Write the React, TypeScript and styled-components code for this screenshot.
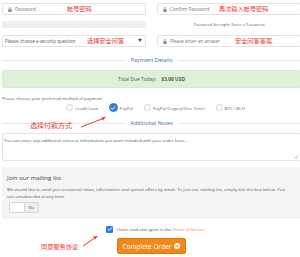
import React from "react";
import styled, { createGlobalStyle } from "styled-components";

const Global = createGlobalStyle`
  html, body { margin: 0; padding: 0; background: #fff; }
  body { font-family: "Open Sans", "Noto Sans CJK SC", sans-serif; color: #555; }
  * { box-sizing: border-box; }
`;

const Page = styled.div`
  position: relative;
  width: 300px;
  height: 257px;
  overflow: hidden;
  padding: 3px 0 0 2px;
`;

const Content = styled.div`
  width: 299px;
  display: flex;
  flex-direction: column;
`;

const FieldGrid = styled.div`
  display: grid;
  grid-template-columns: 144px 1fr;
  grid-template-rows: 12px 7px 12px;
  column-gap: 11px;
  row-gap: 6px;
`;

const InputBox = styled.div<{ $icon?: boolean; $low?: boolean }>`
  position: relative;
  display: flex;
  align-items: center;
  height: 12px;
  border: 1px solid #e3e3e3;
  border-radius: 2px;
  background: #fff;
  padding-left: ${(p) => (p.$icon ? 5 : 2)}px;
  margin-top: ${(p) => (p.$low ? 1 : 0)}px;
`;

const Placeholder = styled.span`
  font-size: 4.6px;
  line-height: 6px;
  color: #777;
  white-space: nowrap;
  margin-left: 3px;
`;

const SelectText = styled.span`
  font-size: 4.5px;
  line-height: 6px;
  color: #555;
  white-space: nowrap;
  flex: 1;
`;

const Caret = styled.span`
  font-size: 4px;
  line-height: 6px;
  color: #444;
  margin-right: 3px;
`;

const Note = styled.span<{ $left: number; $size?: number }>`
  position: absolute;
  left: ${(p) => p.$left}px;
  top: 50%;
  transform: translateY(-50%);
  font-family: "Noto Sans CJK SC", sans-serif;
  font-size: ${(p) => p.$size ?? 6.2}px;
  line-height: 8px;
  color: #f0332d;
  white-space: nowrap;
`;

const FreeNote = styled.span<{ $left: number; $top: number; $size?: number }>`
  position: absolute;
  left: ${(p) => p.$left}px;
  top: ${(p) => p.$top}px;
  font-family: "Noto Sans CJK SC", sans-serif;
  font-size: ${(p) => p.$size ?? 6.2}px;
  line-height: 8px;
  color: #f0332d;
  white-space: nowrap;
`;

const ArrowSvg = styled.svg<{ $left: number; $top: number }>`
  position: absolute;
  left: ${(p) => p.$left}px;
  top: ${(p) => p.$top}px;
  overflow: visible;
`;

const StrengthBar = styled.div`
  height: 7px;
  background: #eee;
  border-radius: 2px;
`;

const StrengthText = styled.div`
  font-size: 4.1px;
  line-height: 7px;
  color: #666;
  text-align: center;
  white-space: nowrap;
`;

const Heading = styled.div<{ $mt: number }>`
  display: flex;
  align-items: center;
  gap: 6px;
  height: 8px;
  margin-top: ${(p) => p.$mt}px;
  &::before,
  &::after {
    content: "";
    flex: 1;
    height: 1px;
    background: #e8e8e8;
  }
`;

const HeadingText = styled.span`
  font-size: 5.5px;
  line-height: 8px;
  color: #4a6f92;
  white-space: nowrap;
`;

const TotalBox = styled.div`
  margin-top: 6px;
  height: 18px;
  background: #dff0d8;
  border: 1px solid #d6ead0;
  border-radius: 2px;
  display: flex;
  align-items: center;
  justify-content: center;
  gap: 5px;
  font-size: 4.9px;
  color: #4d5a4b;
`;

const Strong = styled.strong`
  font-weight: 700;
`;

const Hint = styled.div`
  margin-top: 7px;
  font-size: 4.3px;
  line-height: 6px;
  color: #555;
  white-space: nowrap;
`;

const RadioRow = styled.div`
  margin-top: 2px;
  height: 9px;
  display: flex;
  align-items: center;
  justify-content: center;
  gap: 11px;
  padding-left: 8px;
`;

const RadioItem = styled.label`
  display: flex;
  align-items: center;
  gap: 2px;
  font-size: 4.3px;
  color: #666;
  white-space: nowrap;
`;

const RadioCircle = styled.span<{ $on?: boolean }>`
  width: ${(p) => (p.$on ? 9 : 7)}px;
  height: ${(p) => (p.$on ? 9 : 7)}px;
  border-radius: 50%;
  border: 1px solid ${(p) => (p.$on ? "#2e7fcf" : "#cfcfcf")};
  background: ${(p) => (p.$on ? "#2e7fcf" : "#fff")};
  display: flex;
  align-items: center;
  justify-content: center;
`;

const Notes = styled.div`
  margin-top: 6px;
  position: relative;
  height: 28px;
  border: 1px solid #e3e3e3;
  border-radius: 2px;
  padding: 3px 1px;
  font-size: 4.3px;
  line-height: 6px;
  color: #555;
  white-space: nowrap;
  overflow: hidden;
`;

const Grip = styled.svg`
  position: absolute;
  right: 2px;
  bottom: 1px;
`;

const MailBox = styled.div`
  margin-top: 6px;
  height: 52px;
  background: #f5f5f5;
  padding: 7px 5px 0 5px;
`;

const MailTitle = styled.div`
  font-size: 6.1px;
  line-height: 8px;
  color: #444;
`;

const MailDesc = styled.div`
  margin-top: 4px;
  font-size: 4.35px;
  line-height: 7px;
  color: #555;
  width: 285px;
`;

const Toggle = styled.div`
  margin-top: 2px;
  margin-left: 2px;
  display: flex;
  width: 30px;
  height: 11px;
  border: 1px solid #d5d5d5;
  border-radius: 2px;
  overflow: hidden;
`;

const ToggleKnob = styled.span`
  width: 14px;
  background: #fff;
`;

const ToggleOff = styled.span`
  flex: 1;
  background: #eee;
  border-left: 1px solid #d5d5d5;
  font-size: 4px;
  line-height: 9px;
  text-align: center;
  color: #555;
`;

const AgreeRow = styled.div`
  margin-top: 6px;
  height: 8px;
  display: flex;
  align-items: center;
  justify-content: center;
  gap: 3px;
  padding-left: 8px;
  font-size: 4.2px;
  color: #555;
  white-space: nowrap;
`;

const CheckBox = styled.span`
  width: 7px;
  height: 7px;
  border-radius: 1px;
  background: #2e7fcf;
  display: flex;
  align-items: center;
  justify-content: center;
`;

const Link = styled.span`
  color: #f0861a;
`;

const ButtonRow = styled.div`
  margin-top: 5px;
  display: flex;
  justify-content: center;
`;

const OrderButton = styled.button`
  width: 69px;
  height: 16px;
  padding: 0;
  border: 1px solid #e07b0c;
  border-radius: 2px;
  background: #f0881a;
  color: #fff;
  font-family: "Open Sans", sans-serif;
  font-size: 6.5px;
  display: flex;
  align-items: center;
  justify-content: center;
  gap: 3px;
`;

const Lock = () => (
  <svg width="4" height="5" viewBox="0 0 8 10">
    <path d="M2 4.5V3a2 2 0 0 1 4 0v1.5" fill="none" stroke="#8a8a8a" strokeWidth="1.4" />
    <rect x="0.5" y="4.5" width="7" height="5.5" rx="0.8" fill="#8a8a8a" />
  </svg>
);

const Tick = ({ s }: { s: number }) => (
  <svg width={s} height={s} viewBox="0 0 10 10">
    <path d="M2 5.2l2 2 4-4.4" fill="none" stroke="#fff" strokeWidth="1.6" strokeLinecap="round" strokeLinejoin="round" />
  </svg>
);

const RedArrow = ({ left, top, w, h }: { left: number; top: number; w: number; h: number }) => (
  <ArrowSvg $left={left} $top={top} width={w} height={h} viewBox={`0 0 ${w} ${h}`}>
    <line x1="0" y1={h} x2={w - 2} y2="1.2" stroke="#f0332d" strokeWidth="1" />
    <path d={`M${w} 0 L${w - 5} 0.6 L${w - 3} 3.2 Z`} fill="#f0332d" />
  </ArrowSvg>
);

export default function App() {
  return (
    <>
      <Global />
      <Page>
        <Content>
          <FieldGrid>
            <InputBox $icon>
              <Lock />
              <Placeholder>Password</Placeholder>
              <Note $left={64}>帐号密码</Note>
            </InputBox>
            <InputBox $icon>
              <Lock />
              <Placeholder>Confirm Password</Placeholder>
              <Note $left={61}>再次输入帐号密码</Note>
            </InputBox>
            <StrengthBar />
            <StrengthText>Password Strength: Enter a Password</StrengthText>
            <InputBox $low>
              <SelectText>Please choose a security question</SelectText>
              <Caret>▼</Caret>
              <Note $left={84}>选择安全问答</Note>
            </InputBox>
            <InputBox $icon $low>
              <Lock />
              <Placeholder>Please enter an answer</Placeholder>
              <Note $left={77}>安全问答答案</Note>
            </InputBox>
          </FieldGrid>

          <Heading $mt={10}>
            <HeadingText>Payment Details</HeadingText>
          </Heading>

          <TotalBox>
            <span>Total Due Today:</span>
            <Strong>$3.00 USD</Strong>
          </TotalBox>

          <Hint>Please choose your preferred method of payment.</Hint>

          <RadioRow>
            <RadioItem>
              <RadioCircle />
              Credit Card
            </RadioItem>
            <RadioItem>
              <RadioCircle $on>
                <Tick s={6} />
              </RadioCircle>
              PayPal
            </RadioItem>
            <RadioItem>
              <RadioCircle />
              PayPal (Legacy/One-Time)
            </RadioItem>
            <RadioItem>
              <RadioCircle />
              BTC / BCH
            </RadioItem>
          </RadioRow>

          <Heading $mt={7}>
            <HeadingText>Additional Notes</HeadingText>
          </Heading>

          <Notes>
            You can enter any additional notes or information you want included with your order here...
            <Grip width="4" height="4" viewBox="0 0 4 4">
              <path d="M0 4L4 0M2 4L4 2" stroke="#aaa" strokeWidth="0.6" />
            </Grip>
          </Notes>

          <MailBox>
            <MailTitle>Join our mailing list</MailTitle>
            <MailDesc>
              We would like to send you occasional news, information and special offers by email. To join our mailing list, simply tick the box below. You can unsubscribe at any time.
            </MailDesc>
            <Toggle>
              <ToggleKnob />
              <ToggleOff>No</ToggleOff>
            </Toggle>
          </MailBox>

          <AgreeRow>
            <CheckBox>
              <Tick s={6} />
            </CheckBox>
            <span>
              I have read and agree to the <Link>Terms of Service</Link>
            </span>
          </AgreeRow>

          <ButtonRow>
            <OrderButton>
              Complete Order
              <svg width="6" height="6" viewBox="0 0 12 12">
                <circle cx="6" cy="6" r="6" fill="#fff" />
                <path d="M3 6h5M6 3.5L8.5 6 6 8.5" fill="none" stroke="#f0881a" strokeWidth="1.6" strokeLinecap="round" strokeLinejoin="round" />
              </svg>
            </OrderButton>
          </ButtonRow>
        </Content>

        <FreeNote $left={30} $top={121} $size={7}>选择付款方式</FreeNote>
        <RedArrow left={81} top={117} w={25} h={10} />
        <FreeNote $left={41} $top={243}>同意服务协议</FreeNote>
        <RedArrow left={83} top={236} w={15} h={10} />
      </Page>
    </>
  );
}
